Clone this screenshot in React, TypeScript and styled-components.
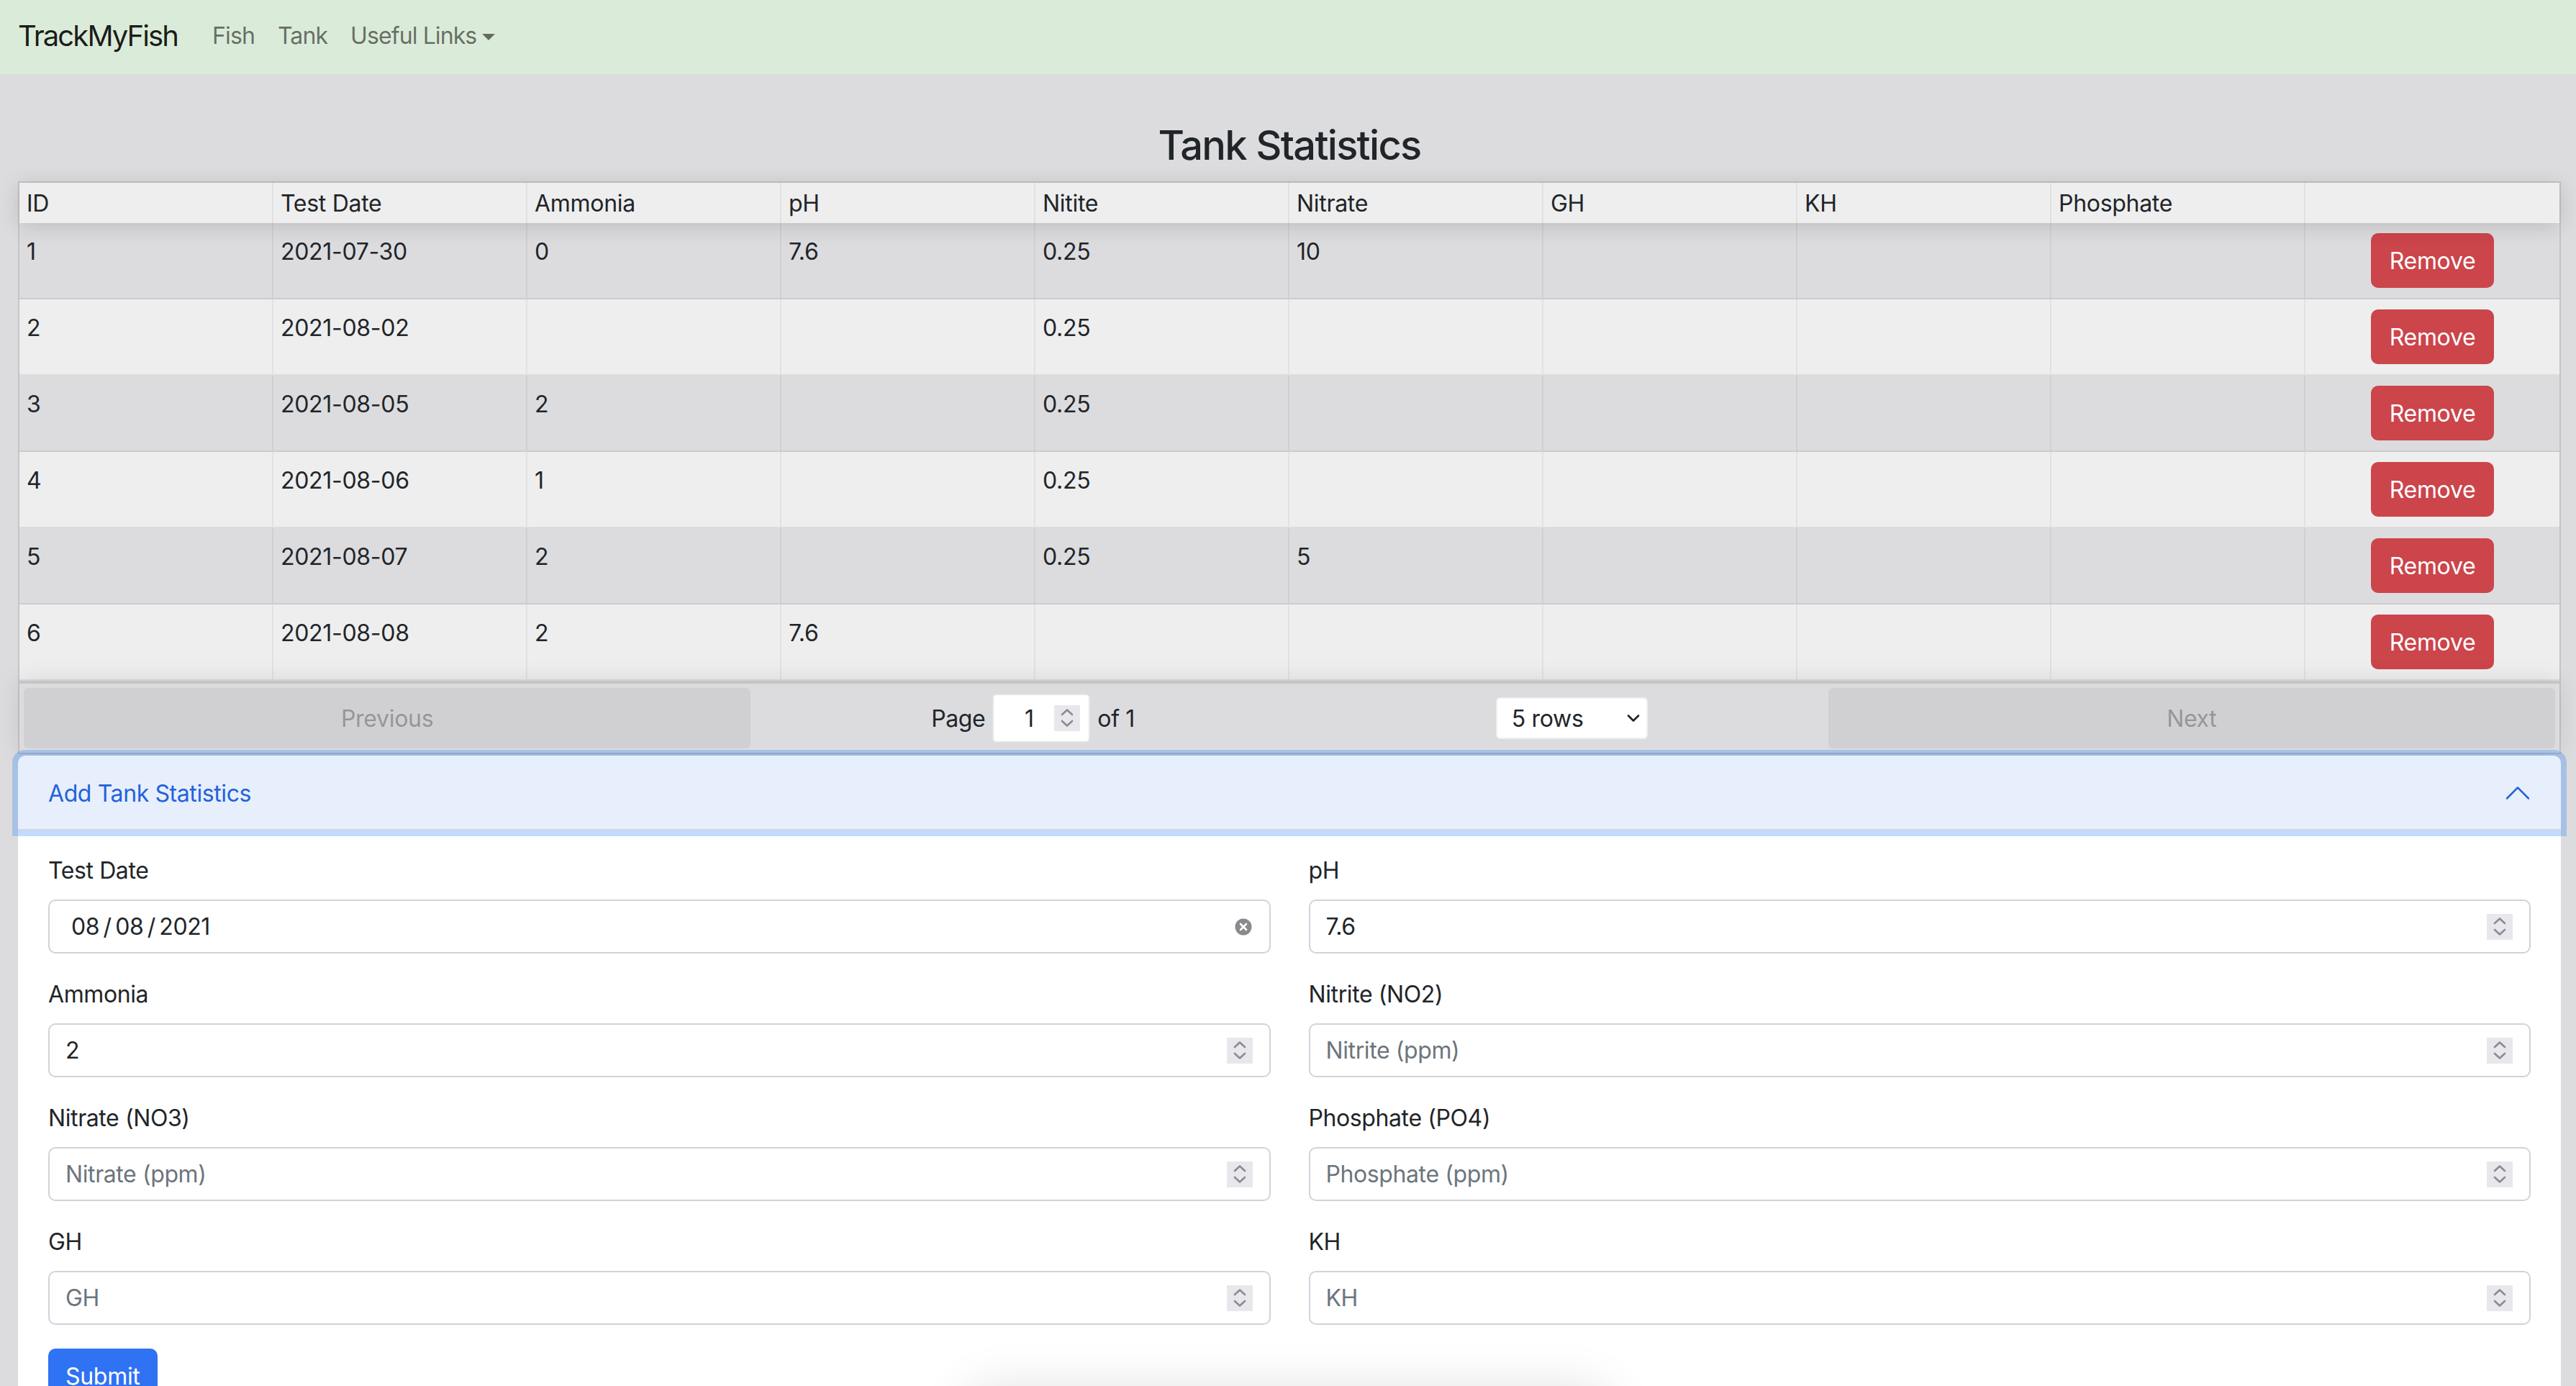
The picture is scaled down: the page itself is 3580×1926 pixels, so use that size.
import React from 'react';
import styled, { createGlobalStyle, css } from 'styled-components';

const GlobalStyle = createGlobalStyle`
  * { box-sizing: border-box; }
  html, body { margin: 0; padding: 0; }
  body {
    background: #dcdcdf;
    font-family: Inter, "Liberation Sans", Arial, sans-serif;
    font-size: 32px;
    color: #212529;
    -webkit-font-smoothing: antialiased;
  }
`;

const Navbar = styled.nav`
  height: 103px;
  background: #dbebd9;
  display: flex;
  align-items: center;
  padding: 0 25px 4px;
`;

const Brand = styled.a`
  font-size: 40px;
  color: rgba(0, 0, 0, 0.9);
  margin-right: 32px;
  letter-spacing: -1.9px;
  text-decoration: none;
`;

const NavLink = styled.a<{ $dropdown?: boolean }>`
  font-size: 32px;
  color: rgba(0, 0, 0, 0.55);
  padding: 0 16px;
  letter-spacing: -0.9px;
  display: flex;
  align-items: center;
  text-decoration: none;
  ${(p) =>
    p.$dropdown &&
    css`
      &::after {
        content: '';
        display: inline-block;
        margin-left: 8px;
        margin-top: 4px;
        border-top: 9px solid;
        border-left: 9px solid transparent;
        border-right: 9px solid transparent;
      }
    `}
`;

const Main = styled.main`
  padding: 0 21px 0 25px;
`;

const Title = styled.h3`
  margin: 66px 0 16px;
  font-size: 56px;
  font-weight: 500;
  line-height: 67px;
  letter-spacing: -1.7px;
  text-align: center;
  color: #212529;
`;

const Table = styled.div`
  border: 2px solid rgba(0, 0, 0, 0.1);
  display: flex;
  flex-direction: column;
`;

const HeadRow = styled.div`
  display: grid;
  grid-template-columns: repeat(10, 1fr);
  height: 56px;
  background: #eeeeee;
  box-shadow: 0 4px 30px 0 rgba(0, 0, 0, 0.15);
  position: relative;
  z-index: 1;
`;

const HeadCell = styled.div`
  display: flex;
  align-items: center;
  padding: 0 10px;
  border-right: 2px solid rgba(0, 0, 0, 0.05);
  letter-spacing: -0.3px;
  &:last-child {
    border-right: 0;
  }
`;

const BodyRow = styled.div<{ $odd: boolean }>`
  display: grid;
  grid-template-columns: repeat(10, 1fr);
  height: 106px;
  border-bottom: 2px solid rgba(0, 0, 0, 0.07);
  background: ${(p) => (p.$odd ? '#dcdcdf' : '#eeeeee')};
`;

const Cell = styled.div`
  padding: 21px 10px 0;
  line-height: 38px;
  white-space: nowrap;
  overflow: hidden;
  letter-spacing: -0.3px;
  border-right: 2px solid rgba(0, 0, 0, 0.05);
`;

const ActionCell = styled.div`
  display: flex;
  justify-content: center;
  align-items: flex-start;
  padding-top: 14px;
`;

const DangerButton = styled.button`
  height: 76px;
  padding: 0 26px;
  border: 0;
  border-radius: 10px;
  background: #cb454b;
  color: #fff;
  font: inherit;
  letter-spacing: -0.3px;
`;

const Pagination = styled.div`
  display: flex;
  align-items: stretch;
  padding: 6px;
  border-top: 4px solid rgba(0, 0, 0, 0.1);
  background: #dcdcdf;
  box-shadow: 0 0 30px 0 rgba(0, 0, 0, 0.1);
`;

const PageButton = styled.button`
  flex: 1;
  height: 84px;
  border: 0;
  border-radius: 6px;
  background: rgba(0, 0, 0, 0.1);
  color: rgba(0, 0, 0, 0.6);
  opacity: 0.5;
  font: inherit;
  letter-spacing: -0.3px;
`;

const PageCenter = styled.div`
  flex: 1.5;
  display: flex;
  align-items: center;
  justify-content: space-around;
`;

const PageInfo = styled.div`
  display: flex;
  align-items: center;
  gap: 10px;
  margin: 6px 20px;
  white-space: nowrap;
  letter-spacing: -0.4px;
`;

const PageJump = styled.div`
  width: 136px;
  height: 68px;
  background: #fff;
  border: 2px solid rgba(0, 0, 0, 0.1);
  border-radius: 6px;
  display: flex;
  align-items: center;
  padding: 0 12px 0 14px;
`;

const JumpValue = styled.span`
  flex: 1;
  text-align: center;
`;

const SelectWrap = styled.div`
  margin: 6px 20px;
  width: 211px;
  height: 58px;
  background: #fff;
  border: 2px solid rgba(0, 0, 0, 0.06);
  border-radius: 6px;
  display: flex;
  align-items: center;
  justify-content: space-between;
  padding: 0 8px 0 20px;
  letter-spacing: -0.3px;
`;

const Accordion = styled.section`
  display: flex;
  flex-direction: column;
`;

const AccordionButton = styled.button`
  display: flex;
  align-items: center;
  justify-content: space-between;
  width: 100%;
  height: 104px;
  margin-top: 2px;
  padding: 0 40px 0 42px;
  border: 0;
  border-radius: 10px 10px 0 0;
  background: #e8effc;
  color: #2362dc;
  font: inherit;
  letter-spacing: -0.4px;
  box-shadow: 0 0 0 8px rgba(13, 110, 253, 0.25), inset 0 -2px 0 rgba(0, 0, 0, 0.1);
  position: relative;
  z-index: 2;
`;

const AccordionBody = styled.div`
  background: #fff;
  padding: 32px 42px 40px;
`;

const FormGrid = styled.div`
  display: grid;
  grid-template-columns: 1fr 1fr;
  column-gap: 53px;
`;

const Field = styled.div`
  margin-bottom: 33px;
`;

const Label = styled.label`
  display: block;
  line-height: 48px;
  margin-bottom: 16px;
  letter-spacing: -0.4px;
`;

const InputBox = styled.div<{ $date?: boolean }>`
  height: 75px;
  display: flex;
  align-items: center;
  background: #fff;
  border: 2px solid #ced4da;
  border-radius: 10px;
  padding: ${(p) => (p.$date ? '0 24px 0 30px' : '0 23px 0 22px')};
`;

const TextInput = styled.input`
  flex: 1;
  min-width: 0;
  border: 0;
  outline: none;
  background: transparent;
  font: inherit;
  color: #212529;
  letter-spacing: -0.4px;
  padding: 0;
  &::placeholder {
    color: #6c757d;
  }
`;

const SubmitButton = styled.button`
  height: 76px;
  padding: 0 24px;
  border: 0;
  border-radius: 10px;
  background: #2f72f3;
  color: #fff;
  font: inherit;
  letter-spacing: -0.3px;
`;

const FloatingShadow = styled.div`
  position: fixed;
  left: 50%;
  top: 1950px;
  transform: translateX(-50%);
  width: 860px;
  height: 120px;
  border-radius: 20px;
  background: #fff;
  box-shadow: 0 0 70px 20px rgba(0, 0, 0, 0.12);
  pointer-events: none;
`;

const Spinner = () => (
  <svg width="36" height="36" viewBox="0 0 36 36" style={{ flex: 'none' }}>
    <rect width="36" height="36" fill="#e8e8ec" />
    <path d="M11 13 L18 6.5 L25 13" fill="none" stroke="#8b8b95" strokeWidth="2.6" strokeLinecap="round" strokeLinejoin="round" />
    <path d="M11 22 L18 28.5 L25 22" fill="none" stroke="#8b8b95" strokeWidth="2.6" strokeLinecap="round" strokeLinejoin="round" />
  </svg>
);

const ClearIcon = () => (
  <svg width="24" height="24" viewBox="0 0 24 24" style={{ flex: 'none' }}>
    <circle cx="12" cy="12" r="11.5" fill="#8a8a8e" />
    <path d="M8 8 L16 16 M16 8 L8 16" stroke="#fff" strokeWidth="2.6" strokeLinecap="round" />
  </svg>
);

const SelectChevron = () => (
  <svg width="20" height="14" viewBox="0 0 20 14" style={{ flex: 'none' }}>
    <path d="M3 3.5 L10 10.5 L17 3.5" fill="none" stroke="#222" strokeWidth="2.6" strokeLinecap="round" strokeLinejoin="round" />
  </svg>
);

const ChevronUp = () => (
  <svg width="40" height="40" viewBox="0 0 16 16" style={{ transform: 'rotate(180deg)', flex: 'none' }}>
    <path
      fill="#2362dc"
      fillRule="evenodd"
      d="M1.646 4.646a.5.5 0 0 1 .708 0L8 10.293l5.646-5.647a.5.5 0 0 1 .708.708l-6 6a.5.5 0 0 1-.708 0l-6-6a.5.5 0 0 1 0-.708z"
    />
  </svg>
);

const columns = ['ID', 'Test Date', 'Ammonia', 'pH', 'Nitite', 'Nitrate', 'GH', 'KH', 'Phosphate', ''];

const rows: string[][] = [
  ['1', '2021-07-30', '0', '7.6', '0.25', '10', '', '', ''],
  ['2', '2021-08-02', '', '', '0.25', '', '', '', ''],
  ['3', '2021-08-05', '2', '', '0.25', '', '', '', ''],
  ['4', '2021-08-06', '1', '', '0.25', '', '', '', ''],
  ['5', '2021-08-07', '2', '', '0.25', '5', '', '', ''],
  ['6', '2021-08-08', '2', '7.6', '', '', '', '', ''],
];

type FieldDef = { label: string; value?: string; placeholder?: string; date?: boolean };

const fields: FieldDef[] = [
  { label: 'Test Date', value: '08\u2009/\u200908\u2009/\u20092021', date: true },
  { label: 'pH', value: '7.6' },
  { label: 'Ammonia', value: '2' },
  { label: 'Nitrite (NO2)', placeholder: 'Nitrite (ppm)' },
  { label: 'Nitrate (NO3)', placeholder: 'Nitrate (ppm)' },
  { label: 'Phosphate (PO4)', placeholder: 'Phosphate (ppm)' },
  { label: 'GH', placeholder: 'GH' },
  { label: 'KH', placeholder: 'KH' },
];

export default function App() {
  return (
    <>
      <GlobalStyle />
      <Navbar>
        <Brand>TrackMyFish</Brand>
        <NavLink>Fish</NavLink>
        <NavLink>Tank</NavLink>
        <NavLink $dropdown>Useful Links</NavLink>
      </Navbar>
      <Main>
        <Title>Tank Statistics</Title>
        <Table>
          <HeadRow>
            {columns.map((c, i) => (
              <HeadCell key={i}>{c}</HeadCell>
            ))}
          </HeadRow>
          {rows.map((r, i) => (
            <BodyRow key={i} $odd={i % 2 === 0}>
              {r.map((v, j) => (
                <Cell key={j}>{v}</Cell>
              ))}
              <ActionCell>
                <DangerButton>Remove</DangerButton>
              </ActionCell>
            </BodyRow>
          ))}
          <Pagination>
            <PageButton disabled>Previous</PageButton>
            <PageCenter>
              <PageInfo>
                <span>Page</span>
                <PageJump>
                  <JumpValue>1</JumpValue>
                  <Spinner />
                </PageJump>
                <span>of 1</span>
              </PageInfo>
              <SelectWrap>
                <span>5 rows</span>
                <SelectChevron />
              </SelectWrap>
            </PageCenter>
            <PageButton disabled>Next</PageButton>
          </Pagination>
        </Table>
        <Accordion>
          <AccordionButton>
            <span>Add Tank Statistics</span>
            <ChevronUp />
          </AccordionButton>
          <AccordionBody>
            <FormGrid>
              {fields.map((f) => (
                <Field key={f.label}>
                  <Label>{f.label}</Label>
                  <InputBox $date={f.date}>
                    <TextInput type="text" readOnly defaultValue={f.value} placeholder={f.placeholder} />
                    {f.date ? <ClearIcon /> : <Spinner />}
                  </InputBox>
                </Field>
              ))}
            </FormGrid>
            <SubmitButton>Submit</SubmitButton>
          </AccordionBody>
        </Accordion>
      </Main>
      <FloatingShadow />
    </>
  );
}
